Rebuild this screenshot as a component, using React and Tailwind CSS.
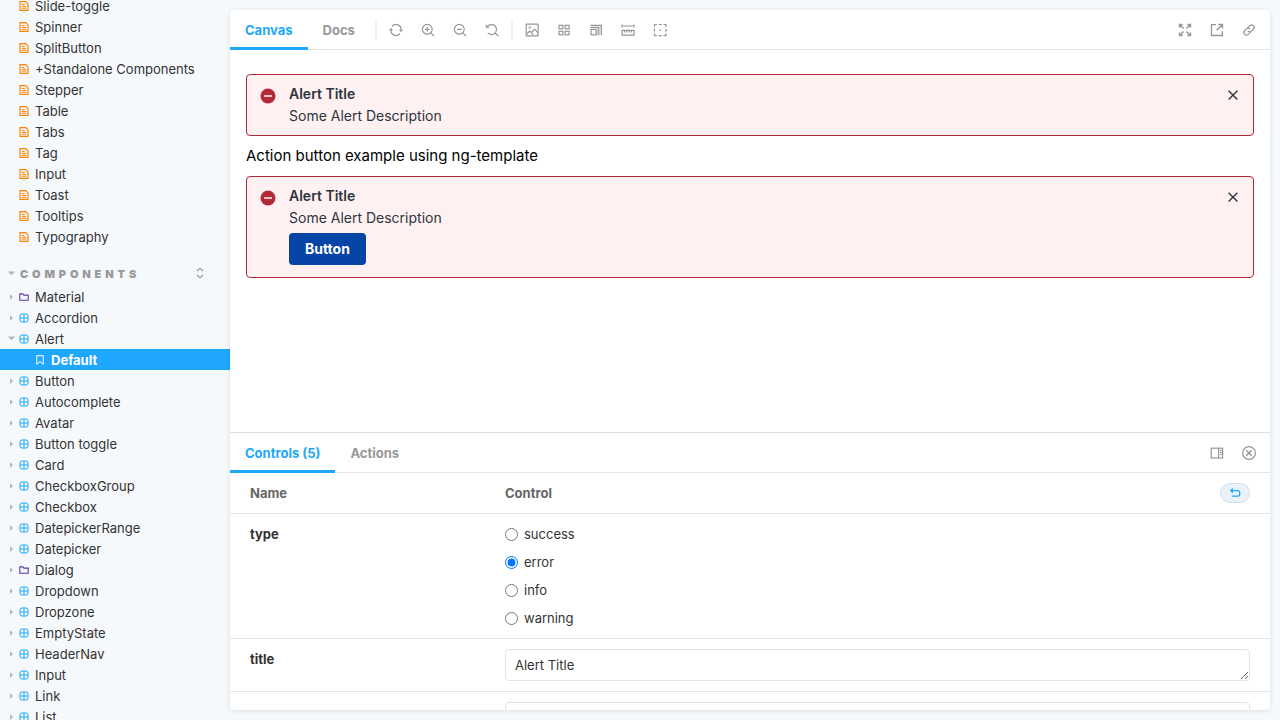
import React, { useState } from 'react';

const Svg = ({ size = 'w-3.5 h-3.5', box = 14, width = 1.2, children }) => (
  <svg
    viewBox={`0 0 ${box} ${box}`}
    className={`${size} shrink-0`}
    fill="none"
    stroke="currentColor"
    strokeWidth={width}
    aria-hidden="true"
  >
    {children}
  </svg>
);

const icons = {
  sync: (
    <>
      <path d="M3 3.6A5 5 0 0 1 12 7.2M11 10.4A5 5 0 0 1 2 6.8" />
      <path d="M9.8 6.8L12 9l2.2-2.2zM-.2 7.2L2 5l2.2 2.2z" fill="currentColor" stroke="none" />
    </>
  ),
  zoomIn: (
    <>
      <circle cx="6.3" cy="6.3" r="4.9" />
      <path d="M9.8 9.8l3.4 3.4M6.3 4v4.6M4 6.3h4.6" />
    </>
  ),
  zoomOut: (
    <>
      <circle cx="6.3" cy="6.3" r="4.9" />
      <path d="M9.8 9.8l3.4 3.4M4 6.3h4.6" />
    </>
  ),
  reset: (
    <>
      <path d="M2.6 3.4a5 5 0 1 1 .2 6.5M10.2 10l3.2 3.2" />
      <path d="M.8 1.2v3.6h3.8z" fill="currentColor" stroke="none" />
    </>
  ),
  photo: (
    <>
      <rect x="1.2" y="1.2" width="11.9" height="11.6" rx=".4" />
      <path d="M1.5 11.2l3.2-3.1 1.6 1.5 3.2-3.5 3.4 3.5M6.3 9.6l2 2" />
      <circle cx="4.7" cy="4.5" r="1" strokeWidth=".8" />
    </>
  ),
  grid: (
    <>
      <rect x="2" y="2.3" width="3.9" height="3.5" />
      <rect x="8.2" y="2.3" width="3.9" height="3.5" />
      <rect x="2" y="8.3" width="3.9" height="3.5" />
      <rect x="8.2" y="8.3" width="3.9" height="3.5" />
    </>
  ),
  grow: (
    <>
      <rect x="2" y="6.4" width="5.2" height="5.4" />
      <path d="M1.5 4.4h7.7v7.9M1.5 2.4h10.9v9.9" />
      <path d="M10.8 3v9.3" strokeWidth=".6" />
    </>
  ),
  ruler: (
    <>
      <path d="M1 3h12M1 1.4v3.2M13 1.4v3.2" />
      <rect x="1" y="7.4" width="12.1" height="4.8" rx=".5" />
      <path d="M3.5 7.4v2.2M5.8 7.4v2.2M8.2 7.4v2.2M10.5 7.4v2.2" />
    </>
  ),
  outline: (
    <path d="M4 1.5H1.5V4M10.5 1.5H13V4M4 12.7H1.5v-2.5M10.5 12.7H13v-2.5M5.8 1.5h3M5.8 12.7h3M1.5 5.7v3M13 5.7v3M6.3 7.1h1.9" />
  ),
  expand: (
    <path d="M1.5 4.6V1.5h3.1M1.7 1.7L5.6 5.6M9.4 1.5h3.1v3.1M12.3 1.7L8.4 5.6M1.5 9.4v3.1h3.1M1.7 12.3l3.9-3.9M12.5 9.4v3.1H9.4M12.3 12.3L8.4 8.4" strokeWidth="1.4" />
  ),
  share: (
    <path d="M6 1.7H1.5v10.8h10.9V8.2M8.3 1.5h4.2v4M12.3 1.7L6.6 7.3" strokeWidth="1.3" />
  ),
  link: (
    <g transform="rotate(-45 7 7)">
      <path d="M6.8 9.5H3.4a2.5 2.5 0 0 1 0-5h2.7a2.5 2.5 0 0 1 2.4 2.7" />
      <path d="M7.2 4.5h3.4a2.5 2.5 0 0 1 0 5H7.9a2.5 2.5 0 0 1-2.4-2.7" />
    </g>
  ),
  sidebar: (
    <>
      <rect x="1.2" y="2.2" width="11.4" height="9.8" />
      <path d="M8.6 2v10M10 4.3h1.6M10 6.3h1.6M10 8.3h1.6" />
    </>
  ),
  close: (
    <>
      <circle cx="7" cy="7" r="6.4" />
      <path d="M4.3 4.3l5.4 5.4M9.7 4.3L4.3 9.7" strokeWidth="1.4" />
    </>
  ),
  undo: (
    <>
      <path d="M2 4.3h8.3a2.2 2.2 0 0 1 2.2 2.2v2a2.2 2.2 0 0 1-2.2 2.2H3.4" strokeWidth="1.5" />
      <path d="M4.4 1.2L1.2 4.3l3.2 3z" fill="currentColor" strokeWidth=".4" />
    </>
  ),
};

const IconButton = ({ name, label }) => (
  <button type="button" aria-label={label} className="flex h-7 w-7 items-center justify-center text-[#969696]">
    <Svg>{icons[name]}</Svg>
  </button>
);

const DocIcon = () => (
  <span className="text-[#ff8300]">
    <Svg size="w-2.5 h-2.5 block" box={10}>
      <path d="M1 .7h5.8L9 2.9v6.4H1z" />
      <path d="M2.7 3.6h3M2.7 5.4h4.6M2.7 7.2h4.6" strokeWidth="1" />
    </Svg>
  </span>
);

const ComponentIcon = () => (
  <span className="text-[#1ea7fd]">
    <Svg size="w-2.5 h-2.5 block" box={10} width={1}>
      <rect x="1" y="1" width="8" height="8" rx="2" />
      <path d="M5 1v8M1 5h8" />
    </Svg>
  </span>
);

const FolderIcon = () => (
  <span className="text-[#5b3aa8]">
    <Svg size="w-2.5 h-2.5 block" box={10} width={1.1}>
      <path d="M.8 8.2V1.9h3.1l1 1.2h4.3v5.1z" />
    </Svg>
  </span>
);

const Caret = ({ open }) => (
  <svg viewBox="0 0 8 8" className="block h-2 w-2 shrink-0" fill="#b3b5b7" aria-hidden="true">
    {open ? <path d="M1 1.6h7L4.5 5.2z" /> : <path d="M3 1.2v5.8l3-2.9z" />}
  </svg>
);

const docs = ['Slide-toggle', 'Spinner', 'SplitButton', '+Standalone Components', 'Stepper', 'Table', 'Tabs', 'Tag', 'Input', 'Toast', 'Tooltips', 'Typography'];

const components = ['Material', 'Accordion', 'Alert', 'Button', 'Autocomplete', 'Avatar', 'Button toggle', 'Card', 'CheckboxGroup', 'Checkbox', 'DatepickerRange', 'Datepicker', 'Dialog', 'Dropdown', 'Dropzone', 'EmptyState', 'HeaderNav', 'Input', 'Link', 'List'];
const folders = ['Material', 'Dialog'];

function Sidebar() {
  return (
    <nav className="w-[230px] shrink-0 overflow-hidden text-[13px] leading-5 text-[#333]">
      <ul className="-mt-[5px]">
        {docs.map((name) => (
          <li key={name}>
            <a href="#doc" className="flex items-center gap-1.5 pt-px pl-[19px]">
              <DocIcon />
              {name}
            </a>
          </li>
        ))}
      </ul>
      <div className="mt-4 mb-1 flex h-[19px] items-center justify-between pr-6 pl-[7px] text-[#999]">
        <button type="button" className="flex items-center gap-[5px] pt-0.5 text-[11px] leading-4 font-black tracking-[0.35em] uppercase">
          <Caret open />
          Components
        </button>
        <button type="button" aria-label="Expand all">
          <Svg size="w-3 h-3 block" box={12}>
            <path d="M3 4l3-2.8L9 4M3 8l3 2.8L9 8" />
          </Svg>
        </button>
      </div>
      <ul>
        {components.map((name) => (
          <li key={name}>
            <a href="#component" className="flex items-center pt-px pl-[7px]">
              <Caret open={name === 'Alert'} />
              <span className="mr-1.5 ml-1">{folders.includes(name) ? <FolderIcon /> : <ComponentIcon />}</span>
              {name}
            </a>
            {name === 'Alert' && (
              <a href="#default" className="flex items-center gap-1.5 bg-[#1ea7fd] pt-px pl-[35px] font-bold text-white">
                <Svg size="w-2.5 h-2.5" box={10} width={1}>
                  <path d="M1.8 .7h6.4v8.6L5 6.6 1.8 9.3z" />
                </Svg>
                Default
              </a>
            )}
          </li>
        ))}
      </ul>
    </nav>
  );
}

const Tab = ({ active, children }) => (
  <button
    type="button"
    role="tab"
    aria-selected={!!active}
    className={`h-10 border-y-3 border-t-transparent px-[15px] text-[13px] leading-4 font-bold ${
      active ? 'border-b-[#1ea7fd] text-[#1ea7fd]' : 'border-b-transparent text-[#999]'
    }`}
  >
    {children}
  </button>
);

const Separator = () => <span className="mx-[5px] h-5 w-0.5 bg-[#f2f2f2]" />;

function Toolbar() {
  return (
    <div className="flex h-10 shrink-0 items-center justify-between pr-[7px] shadow-[inset_0_-1px_0_#e5e5e5]">
      <div className="flex items-center">
        <div role="tablist" className="flex">
          <Tab active>Canvas</Tab>
          <Tab>Docs</Tab>
        </div>
        <Separator />
        <div className="flex gap-1">
          <IconButton name="sync" label="Remount component" />
          <IconButton name="zoomIn" label="Zoom in" />
          <IconButton name="zoomOut" label="Zoom out" />
          <IconButton name="reset" label="Reset zoom" />
        </div>
        <Separator />
        <div className="flex gap-1">
          <IconButton name="photo" label="Change background" />
          <IconButton name="grid" label="Apply grid" />
          <IconButton name="grow" label="Change viewport size" />
          <IconButton name="ruler" label="Enable measure" />
          <IconButton name="outline" label="Apply outlines" />
        </div>
      </div>
      <div className="flex gap-1">
        <IconButton name="expand" label="Go full screen" />
        <IconButton name="share" label="Open canvas in new tab" />
        <IconButton name="link" label="Copy canvas link" />
      </div>
    </div>
  );
}

function Alert({ title, children }) {
  return (
    <div
      role="alert"
      className={`flex items-start rounded border border-[#b12a37] bg-[#fff0f1] pt-2 pr-[13px] pl-[13px] text-sm leading-[22px] text-[#2b3640] ${
        children ? 'pb-3' : 'pb-2'
      }`}
    >
      <svg viewBox="0 0 16 16" className="mt-[5px] mr-[13px] h-4 w-4 shrink-0" aria-hidden="true">
        <circle cx="8" cy="8" r="7.5" fill="#b12a37" />
        <path d="M4 8h8" stroke="#fff0f1" strokeWidth="1.6" />
      </svg>
      <div className="grow">
        <h2 className="font-semibold">{title}</h2>
        <p>Some Alert Description</p>
        {children}
      </div>
      <button type="button" aria-label="Close" className="mt-[5px]">
        <svg viewBox="0 0 14 14" className="block h-3.5 w-3.5" fill="none" stroke="#2b3640" strokeWidth="1.4" aria-hidden="true">
          <path d="M2.6 2.8l8.8 8.6M11.4 2.8l-8.8 8.6" />
        </svg>
      </button>
    </div>
  );
}

const fieldClass = 'block h-8 w-full resize-y overflow-hidden rounded border border-[#e3e3e3] bg-white px-[9px] py-[5px] text-[13px] leading-5 text-[#333]';

function Controls({ title, setTitle }) {
  const [type, setType] = useState('error');
  const [description, setDescription] = useState('Some Alert Description');
  return (
    <table className="w-full table-fixed border-collapse text-left text-[13px] leading-5 text-[#333]">
      <thead>
        <tr className="border-b border-[#e5e5e5] text-[#666]">
          <th className="w-1/4 py-2.5 pl-5 font-bold">Name</th>
          <th className="py-2.5 pr-5 pl-[15px] font-bold">
            <div className="flex items-center justify-between">
              Control
              <button
                type="button"
                aria-label="Reset controls"
                className="flex h-5 w-[30px] items-center justify-center rounded-full border border-[#d5dfe8] bg-[#e9f2fb] text-[#1ea7fd]"
              >
                <Svg size="w-3 h-3">{icons.undo}</Svg>
              </button>
            </div>
          </th>
        </tr>
      </thead>
      <tbody className="align-top">
        <tr className="border-b border-[#e5e5e5]">
          <td className="py-2.5 pl-5 font-bold">type</td>
          <td className="py-2.5 pr-5 pl-[15px]">
            <div className="flex flex-col items-start gap-2">
              {['success', 'error', 'info', 'warning'].map((option) => (
                <label key={option} className="flex items-center gap-1.5">
                  <input
                    type="radio"
                    name="type"
                    className="h-[13px] w-[13px]"
                    checked={type === option}
                    onChange={() => setType(option)}
                  />
                  {option}
                </label>
              ))}
            </div>
          </td>
        </tr>
        <tr className="border-b border-[#e5e5e5]">
          <td className="py-2.5 pl-5 font-bold">
            <label htmlFor="title">title</label>
          </td>
          <td className="py-2.5 pr-5 pl-[15px]">
            <textarea id="title" rows={1} className={fieldClass} value={title} onChange={(e) => setTitle(e.target.value)} />
          </td>
        </tr>
        <tr>
          <td />
          <td className="py-2.5 pr-5 pl-[15px]">
            <textarea
              aria-label="description"
              rows={1}
              className={fieldClass}
              value={description}
              onChange={(e) => setDescription(e.target.value)}
            />
          </td>
        </tr>
      </tbody>
    </table>
  );
}

export default function App() {
  const [title, setTitle] = useState('Alert Title');
  return (
    <div className="flex h-screen overflow-hidden bg-[#f6f9fc] font-['Inter',sans-serif]">
      <Sidebar />
      <main className="my-2.5 mr-2.5 flex min-w-0 grow flex-col overflow-hidden rounded bg-white shadow-[0_1px_5px_rgba(0,0,0,0.1)]">
        <Toolbar />
        <section className="min-h-0 grow overflow-hidden px-4 pt-6">
          <Alert title={title} />
          <p className="my-2 text-[15px] leading-6 text-black">Action button example using ng-template</p>
          <Alert title={title}>
            <button type="button" className="mt-1 block h-8 rounded bg-[#0645a5] px-4 text-sm font-bold text-white">
              Button
            </button>
          </Alert>
        </section>
        <section className="h-[278px] shrink-0 overflow-hidden border-t border-[#dedede]">
          <div className="flex h-10 items-center justify-between pr-[7px] shadow-[inset_0_-1px_0_#e5e5e5]">
            <div role="tablist" className="flex">
              <Tab active>Controls (5)</Tab>
              <Tab>Actions</Tab>
            </div>
            <div className="flex gap-1">
              <IconButton name="sidebar" label="Change addon orientation" />
              <IconButton name="close" label="Hide addons" />
            </div>
          </div>
          <Controls title={title} setTitle={setTitle} />
        </section>
      </main>
    </div>
  );
}
